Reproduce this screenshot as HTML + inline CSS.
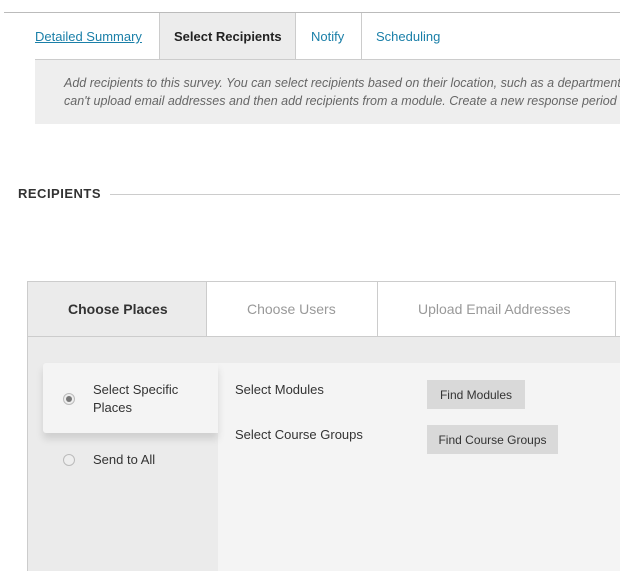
<!DOCTYPE html>
<html><head><style>
body{margin:0;width:620px;height:571px;overflow:hidden;background:#fff;font-family:"Liberation Sans",sans-serif;position:relative}
.a{position:absolute}
.t{font-size:13px;white-space:nowrap}
</style></head><body>
<div class="a" style="left:4px;top:12px;width:616px;height:1px;background:#bbb"></div>
<div class="a" style="left:159px;top:13px;width:137px;height:46px;background:#ececec;border-left:1px solid #ccc;border-right:1px solid #ccc;box-sizing:border-box"></div>
<div class="a" style="left:361px;top:13px;width:1px;height:46px;background:#ccc"></div>
<div class="a t" style="left:35px;top:29px;color:#1a7fa8;text-decoration:underline">Detailed Summary</div>
<div class="a t" style="left:174px;top:29px;color:#222;font-weight:bold">Select Recipients</div>
<div class="a t" style="left:311px;top:29px;color:#1a7fa8">Notify</div>
<div class="a t" style="left:376px;top:29px;color:#1a7fa8">Scheduling</div>
<div class="a" style="left:35px;top:59px;width:585px;height:65px;background:#eee;border-top:1px solid #ccc;box-sizing:border-box"></div>
<div class="a" style="left:64px;top:74px;font-size:12.5px;font-style:italic;color:#666;line-height:18px;white-space:nowrap">Add recipients to this survey. You can select recipients based on their location, such as a department<br>can't upload email addresses and then add recipients from a module. Create a new response period</div>
<div class="a" style="left:18px;top:186px;font-size:13px;font-weight:bold;color:#333;letter-spacing:0.5px">RECIPIENTS</div>
<div class="a" style="left:110px;top:194px;width:510px;height:1px;background:#ccc"></div>
<div class="a" style="left:27px;top:281px;width:593px;height:290px;background:#ebebeb;border:1px solid #ccc;border-bottom:none;border-right:none;box-sizing:border-box"></div>
<div class="a" style="left:616px;top:281px;width:4px;height:56px;background:#fff"></div>
<div class="a" style="left:206px;top:281px;width:410px;height:56px;background:#fff;border:1px solid #ccc;box-sizing:border-box"></div>
<div class="a" style="left:377px;top:281px;width:1px;height:56px;background:#ccc"></div>
<div class="a" style="left:27px;top:336px;width:593px;height:1px;background:#ccc"></div>
<div class="a" style="left:68px;top:301px;font-size:14px;font-weight:bold;color:#333">Choose Places</div>
<div class="a" style="left:247px;top:301px;font-size:14px;color:#999">Choose Users</div>
<div class="a" style="left:418px;top:301px;font-size:14px;color:#999">Upload Email Addresses</div>
<div class="a" style="left:218px;top:363px;width:402px;height:208px;background:#f4f4f4"></div>
<div class="a" style="left:43px;top:363px;width:175px;height:70px;background:#f4f4f4;border-radius:3px 0 0 3px;box-shadow:0 6px 8px rgba(0,0,0,0.12)"></div>
<div class="a" style="left:63px;top:393px;width:10px;height:10px;border:1px solid #bbb;border-radius:50%;background:#eee"></div>
<div class="a" style="left:66px;top:396px;width:6px;height:6px;border-radius:50%;background:#777"></div>
<div class="a" style="left:63px;top:454px;width:10px;height:10px;border:1px solid #bbb;border-radius:50%;background:#eee"></div>
<div class="a" style="left:93px;top:381px;font-size:13px;color:#333;line-height:18px">Select Specific<br>Places</div>
<div class="a t" style="left:93px;top:452px;color:#333">Send to All</div>
<div class="a t" style="left:235px;top:382px;color:#333">Select Modules</div>
<div class="a t" style="left:235px;top:427px;color:#333">Select Course Groups</div>
<div class="a" style="left:427px;top:380px;width:98px;height:29px;background:#d9d9d9;font-size:12px;color:#333;line-height:30px;text-align:center">Find Modules</div>
<div class="a" style="left:427px;top:425px;width:131px;height:29px;background:#d9d9d9;font-size:12px;color:#333;line-height:30px;text-align:center">Find Course Groups</div>
</body></html>
